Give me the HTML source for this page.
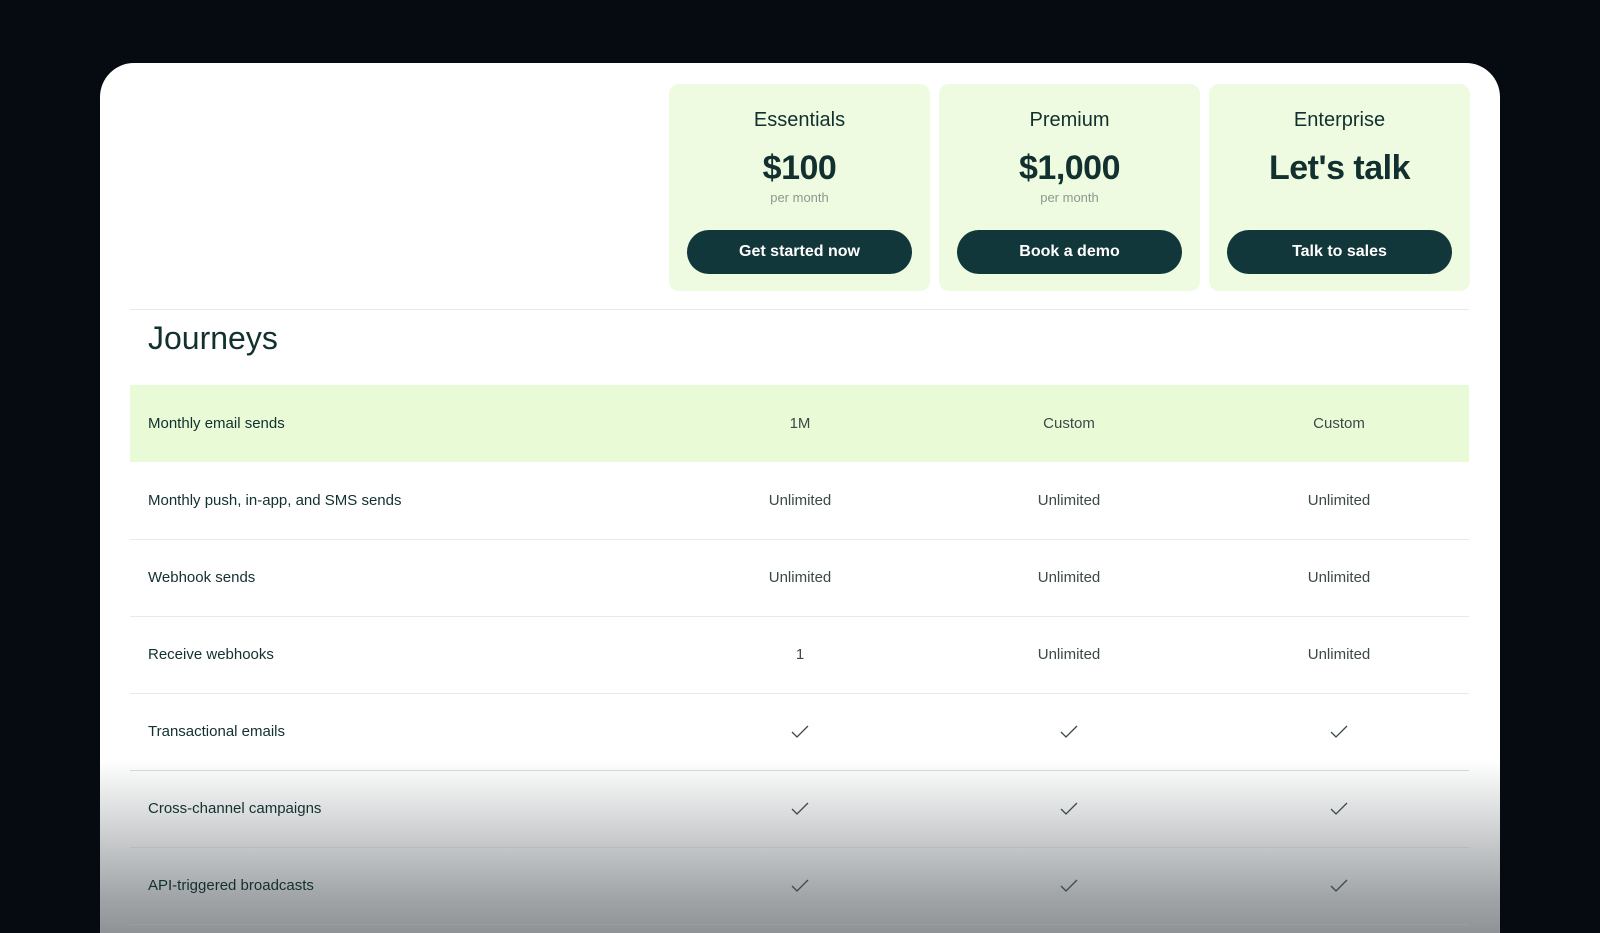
<!DOCTYPE html>
<html><head><style>
*{margin:0;padding:0;box-sizing:border-box}
html,body{width:1600px;height:933px;overflow:hidden}
body{background:#060b12;font-family:"Liberation Sans",sans-serif;position:relative;color:#0f2a2e}
.card{position:absolute;left:100px;top:63px;width:1400px;height:900px;background:#fff;border-radius:34px;overflow:hidden}
.plan{position:absolute;top:21px;width:261px;height:207px;background:#eefbe0;border-radius:10px;text-align:center}
.plan .t{position:absolute;top:24px;width:100%;font-size:20px;line-height:24px;color:#12302f}
.plan .p{position:absolute;top:64px;width:100%;font-size:34px;line-height:40px;color:#12302f;letter-spacing:-0.5px;font-weight:bold}
.plan .m{position:absolute;top:106px;width:100%;font-size:13px;line-height:16px;color:#8a9a8e}
.plan .b{position:absolute;left:18px;top:146px;width:225px;height:44px;border-radius:22px;background:#11373b;color:#fff;font-size:16px;line-height:44px;font-weight:bold}
.line{position:absolute;left:30px;width:1339px;height:1px;background:#e8ece8}
.row{position:absolute;left:30px;width:1339px;height:77px;font-size:15px;color:#12302f}
.row span{position:absolute;top:0;line-height:77px}
.row .l{left:18px}
.row .c{width:200px;text-align:center;color:#3a4a48}
.c1{left:570px}.c2{left:839px}.c3{left:1109px}
.fade{position:absolute;left:0;top:697px;width:1400px;height:210px;background:linear-gradient(#fff 0%,#d4d6d7 30%,#a2a5a8 65%,#7c8084 100%);}
svg{vertical-align:middle}
</style></head><body>
<div class="card">
<div class="fade"></div>
<div class="plan" style="left:569px"><div class="t">Essentials</div><div class="p">$100</div><div class="m">per month</div><div class="b">Get started now</div></div>
<div class="plan" style="left:839px"><div class="t">Premium</div><div class="p">$1,000</div><div class="m">per month</div><div class="b">Book a demo</div></div>
<div class="plan" style="left:1109px"><div class="t">Enterprise</div><div class="p">Let's talk</div><div class="b">Talk to sales</div></div>
<div class="line" style="top:246px"></div>
<div style="position:absolute;left:48px;top:257px;font-size:32px;color:#12302f">Journeys</div>
<div class="row" style="top:322px;background:#e9fbd6"><span class="l">Monthly email sends</span><span class="c c1">1M</span><span class="c c2">Custom</span><span class="c c3">Custom</span></div>
<div class="row" style="top:399px"><span class="l">Monthly push, in-app, and SMS sends</span><span class="c c1">Unlimited</span><span class="c c2">Unlimited</span><span class="c c3">Unlimited</span></div>
<div class="line" style="top:476px"></div>
<div class="row" style="top:476px"><span class="l">Webhook sends</span><span class="c c1">Unlimited</span><span class="c c2">Unlimited</span><span class="c c3">Unlimited</span></div>
<div class="line" style="top:553px"></div>
<div class="row" style="top:553px"><span class="l">Receive webhooks</span><span class="c c1">1</span><span class="c c2">Unlimited</span><span class="c c3">Unlimited</span></div>
<div class="line" style="top:630px"></div>
<div class="row" style="top:630px"><span class="l">Transactional emails</span><span class="c c1"><svg width="18" height="14"><path d="M1 7l5 5L17 1" fill="none" stroke="#3a4a48" stroke-width="1.3"/></svg></span><span class="c c2"><svg width="18" height="14"><path d="M1 7l5 5L17 1" fill="none" stroke="#3a4a48" stroke-width="1.3"/></svg></span><span class="c c3"><svg width="18" height="14"><path d="M1 7l5 5L17 1" fill="none" stroke="#3a4a48" stroke-width="1.3"/></svg></span></div>
<div class="line" style="top:707px;background:#d4d6d6"></div>
<div class="row" style="top:707px"><span class="l">Cross-channel campaigns</span><span class="c c1"><svg width="18" height="14"><path d="M1 7l5 5L17 1" fill="none" stroke="#3a4a48" stroke-width="1.3"/></svg></span><span class="c c2"><svg width="18" height="14"><path d="M1 7l5 5L17 1" fill="none" stroke="#3a4a48" stroke-width="1.3"/></svg></span><span class="c c3"><svg width="18" height="14"><path d="M1 7l5 5L17 1" fill="none" stroke="#3a4a48" stroke-width="1.3"/></svg></span></div>
<div class="line" style="top:784px;background:#b8babb"></div>
<div class="row" style="top:784px"><span class="l">API-triggered broadcasts</span><span class="c c1"><svg width="18" height="14"><path d="M1 7l5 5L17 1" fill="none" stroke="#3a4a48" stroke-width="1.3"/></svg></span><span class="c c2"><svg width="18" height="14"><path d="M1 7l5 5L17 1" fill="none" stroke="#3a4a48" stroke-width="1.3"/></svg></span><span class="c c3"><svg width="18" height="14"><path d="M1 7l5 5L17 1" fill="none" stroke="#3a4a48" stroke-width="1.3"/></svg></span></div>
<div class="line" style="top:861px;background:#9a9da0"></div>
</div>
</body></html>
